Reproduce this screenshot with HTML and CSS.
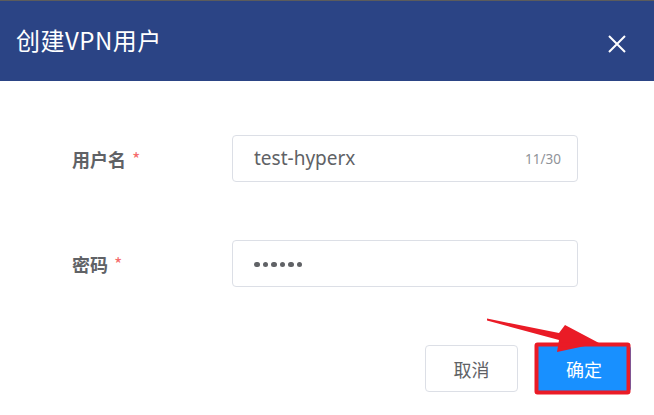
FILE: index.html
```html
<!DOCTYPE html>
<html lang="zh">
<head>
<meta charset="utf-8">
<title>创建VPN用户</title>
<link rel="stylesheet" href="styles.css">
</head>
<body>
<div class="dialog">
  <header class="dlg-header">
    <h1 class="dlg-title">创建VPN用户</h1>
    <button class="dlg-close" aria-label="关闭">
      <svg width="20" height="20" viewBox="0 0 20 20"><path d="M2 2 L18 18 M18 2 L2 18" stroke="#fff" stroke-width="2" fill="none"/></svg>
    </button>
  </header>
  <div class="dlg-body">
    <div class="form-row">
      <label class="form-label">用户名<span class="req">*</span></label>
      <div class="field">
        <span class="field-value">test-hyperx</span>
        <span class="field-count">11/30</span>
      </div>
    </div>
    <div class="form-row">
      <label class="form-label">密码<span class="req">*</span></label>
      <div class="field">
        <span class="dots"><i></i><i></i><i></i><i></i><i></i><i></i></span>
      </div>
    </div>
  </div>
  <footer class="dlg-footer">
    <button class="btn btn-default">取消</button>
    <button class="btn btn-primary">确定</button>
  </footer>
  <svg class="annot" width="654" height="415" viewBox="0 0 654 415">
    <polygon points="487,318.5 559,333 565,325 599,343 557,352 559,340 487,320.5" fill="#ea1b26"/>
    <rect x="536.5" y="344.5" width="92" height="48" fill="none" stroke="#ea1b26" stroke-width="4" rx="1"/>
  </svg>
</div>
</body>
</html>
```
FILE: styles.css
```css
* { box-sizing: border-box; }
html, body { margin: 0; padding: 0; background: #fff; }
body {
  width: 654px;
  height: 415px;
  overflow: hidden;
  font-family: "Noto Sans CJK SC", "Noto Sans", sans-serif;
}
.dialog {
  position: relative;
  width: 654px;
  height: 415px;
  background: #fff;
}
.dlg-header {
  height: 81px;
  background: #2b4485;
  border-top: 1px solid #5c5c5c;
  display: flex;
  align-items: center;
  justify-content: space-between;
  padding: 0 27px 0 16px;
}
.dlg-title {
  margin: 0;
  color: #fff;
  font-size: 24px;
  font-weight: 400;
  letter-spacing: 0.5px;
  line-height: 1;
  margin-top: -2px;
}
.dlg-close {
  background: none;
  border: 0;
  padding: 0;
  width: 20px;
  height: 20px;
  display: flex;
  margin-top: 6px;
}
.dlg-body {
  padding: 54px 0 0 72px;
  display: flex;
  flex-direction: column;
  gap: 58px;
}
.form-row {
  display: grid;
  grid-template-columns: 160px 346px;
  align-items: center;
}
.form-label {
  font-size: 18px;
  font-weight: 700;
  color: #606266;
  display: flex;
  align-items: center;
}
.req {
  color: #f56c6c;
  font-weight: 400;
  font-size: 18px;
  margin-left: 6px;
  line-height: 1;
  margin-top: -2px;
}
.field {
  height: 47px;
  border: 1px solid #dcdfe6;
  border-radius: 4px;
  display: flex;
  align-items: center;
  justify-content: space-between;
  padding: 0 16px 0 21px;
}
.field-value {
  font-family: "Noto Sans", "Open Sans", sans-serif;
  font-size: 19px;
  color: #606266;
  margin-top: -1px;
}
.field-count {
  font-family: "Noto Sans", sans-serif;
  font-size: 13.5px;
  color: #909399;
}
.dots {
  display: flex;
  gap: 3px;
  margin-top: 2px;
}
.dots i {
  width: 5.5px;
  height: 5.5px;
  border-radius: 50%;
  background: #606266;
  display: block;
}
.dlg-footer {
  display: flex;
  justify-content: flex-end;
  gap: 19px;
  padding: 58px 23px 0 0;
}
.btn {
  height: 47px;
  border-radius: 4px;
  font-family: "Noto Sans CJK SC", sans-serif;
  font-size: 18px;
  padding: 0;
  cursor: pointer;
}
.btn-default {
  width: 93px;
  background: #fff;
  border: 1px solid #dcdfe6;
  color: #606266;
}
.btn-primary {
  width: 94px;
  background: #1890ff;
  border: 1px solid #1890ff;
  color: #fff;
}
.annot {
  position: absolute;
  left: 0;
  top: 0;
  pointer-events: none;
}
```
